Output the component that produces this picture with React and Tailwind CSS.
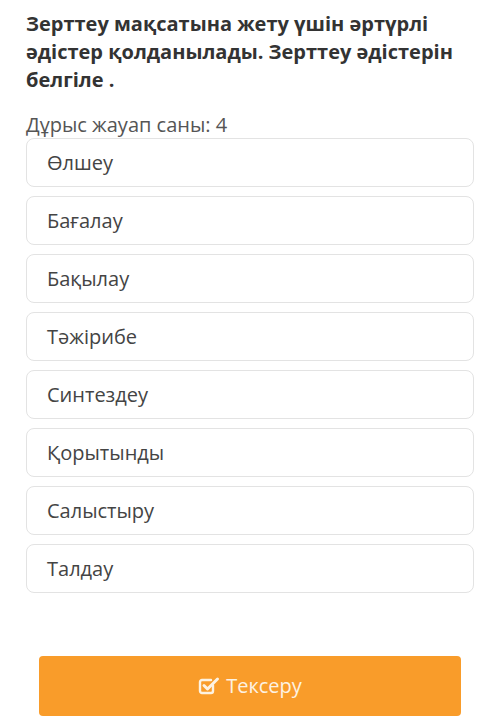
import React from 'react';

const options = ['Өлшеу', 'Бағалау', 'Бақылау', 'Тәжірибе', 'Синтездеу', 'Қорытынды', 'Салыстыру', 'Талдау'];

export default function App() {
  return (
    <div className="w-[500px] h-[719px] bg-white overflow-hidden font-['Open_Sans',sans-serif]">
      <div className="px-[26px] pt-[10px]">
        <h1 className="text-[20px] leading-[28px] font-bold text-[#333]">
          Зерттеу мақсатына жету үшін әртүрлі әдістер қолданылады. Зерттеу әдістерін белгіле .
        </h1>
        <div className="mt-[19px] h-[24px] text-[20px] leading-[24px] text-[#555]">Дұрыс жауап саны: 4</div>
        <div className="mt-[1px] flex flex-col gap-[9px]">
          {options.map((o) => (
            <div key={o} className="h-[49px] rounded-[8px] border border-[#e3e3e3] flex items-center pl-[20px] text-[20px] text-[#444]">
              {o}
            </div>
          ))}
        </div>
      </div>
      <div className="px-[39px] mt-[63px]">
        <button className="w-full h-[60px] rounded-[4px] bg-[#f99c2a] flex items-center justify-center gap-[6px] text-[20px] text-[#fdf2e2]">
          <svg width="22" height="22" viewBox="0 0 22 22" fill="none">
            <path d="M15 10.5v5.5a2 2 0 0 1-2 2H4a2 2 0 0 1-2-2V7a2 2 0 0 1 2-2h9" stroke="currentColor" strokeWidth="2.4" strokeLinecap="round" />
            <path d="M6 10.5l3.5 3.5L19.5 4" stroke="currentColor" strokeWidth="3" strokeLinecap="round" strokeLinejoin="round" />
          </svg>
          Тексеру
        </button>
      </div>
    </div>
  );
}
